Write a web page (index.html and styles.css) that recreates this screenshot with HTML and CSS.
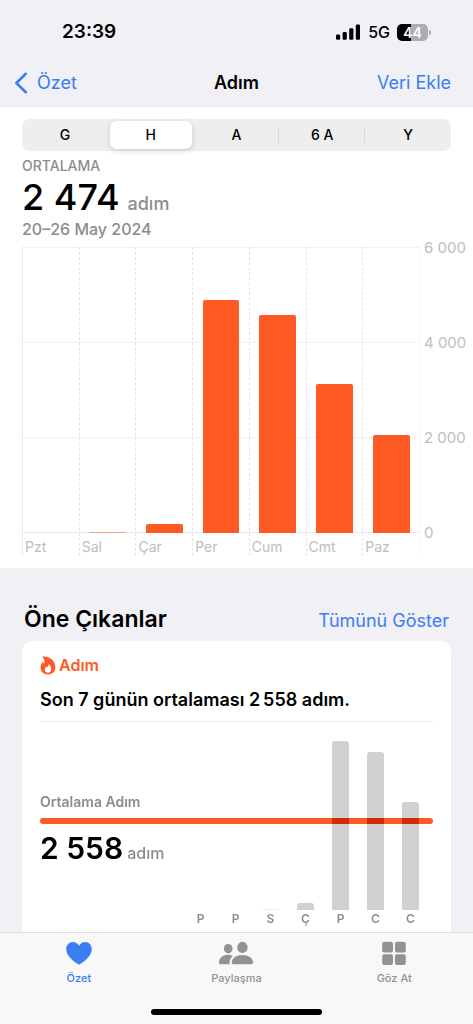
FILE: index.html
```html
<!DOCTYPE html>
<html lang="tr">
<head>
<meta charset="utf-8">
<meta name="viewport" content="width=device-width, initial-scale=1">
<title>Adım</title>
<link rel="stylesheet" href="styles.css">
</head>
<body>
<div class="app">
  <header class="top">
    <div class="status">
      <time class="clock">23:39</time>
      <div class="signals">
        <svg class="bars-icon" width="25" height="16" viewBox="0 0 25 16" aria-hidden="true">
          <rect x="0" y="10.5" width="4.2" height="5.2" rx="1.3"/>
          <rect x="6.6" y="8" width="4.2" height="7.7" rx="1.3"/>
          <rect x="13.2" y="4.2" width="4.2" height="11.5" rx="1.3"/>
          <rect x="19.8" y="0.4" width="4.2" height="15.3" rx="1.3"/>
        </svg>
        <span class="network">5G</span>
        <span class="battery"><span class="battery-level">44</span></span>
      </div>
    </div>
    <nav class="navbar">
      <a class="back" href="#ozet">
        <svg width="14" height="22" viewBox="0 0 14 22" aria-hidden="true"><path d="M11.8 1.8 2.4 11l9.4 9.2" fill="none" stroke="currentColor" stroke-width="2.6" stroke-linecap="round" stroke-linejoin="round"/></svg>
        <span>Özet</span>
      </a>
      <h1 class="title">Adım</h1>
      <a class="add" href="#ekle">Veri Ekle</a>
    </nav>
  </header>

  <main class="content">
    <section class="summary">
      <div class="segments" role="group" aria-label="Zaman aralığı">
        <button type="button" class="segment">G</button>
        <button type="button" class="segment selected" aria-pressed="true">H</button>
        <button type="button" class="segment">A</button>
        <button type="button" class="segment divided">6 A</button>
        <button type="button" class="segment divided">Y</button>
      </div>
      <p class="caption">ORTALAMA</p>
      <p class="total"><span class="total-value">2 474</span><span class="unit">adım</span></p>
      <p class="range">20–26 May 2024</p>

      <div class="chart">
        <div class="plot">
          <div class="day"><div class="track"></div><span class="day-name">Pzt</span></div>
          <div class="day"><div class="track"><div class="bar faint" style="height:1px"></div></div><span class="day-name">Sal</span></div>
          <div class="day"><div class="track"><div class="bar" style="height:3%"></div></div><span class="day-name">Çar</span></div>
          <div class="day"><div class="track"><div class="bar" style="height:81.6%"></div></div><span class="day-name">Per</span></div>
          <div class="day"><div class="track"><div class="bar" style="height:76.1%"></div></div><span class="day-name">Cum</span></div>
          <div class="day"><div class="track"><div class="bar" style="height:52.1%"></div></div><span class="day-name">Cmt</span></div>
          <div class="day"><div class="track"><div class="bar" style="height:34.2%"></div></div><span class="day-name">Paz</span></div>
        </div>
        <div class="scale"><span>6 000</span><span>4 000</span><span>2 000</span><span>0</span></div>
      </div>
    </section>

    <section class="highlights">
      <div class="heading">
        <h2 class="heading-title">Öne Çıkanlar</h2>
        <a class="heading-link" href="#tumu">Tümünü Göster</a>
      </div>
      <article class="card">
        <h3 class="card-kind">
          <svg width="16" height="19" viewBox="0 0 16 19" aria-hidden="true"><path fill="currentColor" fill-rule="evenodd" d="M2.900.5C9.500.2 15.400 4.300 15.400 11.300c0 4.500-3.100 7.200-7.400 7.200-4.400 0-7.400-2.800-7.400-6.900 0-2.500 1-4.200 2-5.700.3.700.8 1.200 1.600 1.600C4.900 5.100 4.600 3.300 2.300 1.100 2 .8 2.300.5 2.900.5zM8.700 7.800c.2 1.700-.5 2.700-1.300 3.500-.5-.2-.7-.6-.8-1.100-1.100 1.100-1.800 2.200-1.800 3.500 0 1.900 1.300 3 3.200 3s3.200-1.200 3.200-3.100c0-2.300-1.100-4.300-2.500-5.800z"/></svg>
          <span>Adım</span>
        </h3>
        <p class="card-text">Son 7 günün ortalaması 2&#8201;558 adım.</p>
        <div class="trend">
          <div class="average">
            <p class="average-label">Ortalama Adım</p>
            <div class="average-line"></div>
            <p class="average-total"><span class="average-value">2 558</span><span class="average-unit">adım</span></p>
          </div>
          <div class="trend-bars">
            <div class="mini-track"></div>
            <div class="mini-track"></div>
            <div class="mini-track"><div class="mini-bar trace" style="height:1px"></div></div>
            <div class="mini-track"><div class="mini-bar" style="height:4%"></div></div>
            <div class="mini-track"><div class="mini-bar" style="height:99.4%"></div></div>
            <div class="mini-track"><div class="mini-bar" style="height:92.9%"></div></div>
            <div class="mini-track"><div class="mini-bar" style="height:63.5%"></div></div>
          </div>
          <div class="trend-days"><span>P</span><span>P</span><span>S</span><span>Ç</span><span>P</span><span>C</span><span>C</span></div>
        </div>
      </article>
    </section>
  </main>

  <footer class="bottom">
    <nav class="tabs">
      <a class="tab active" href="#ozet">
        <svg width="36" height="26" viewBox="0 0 36 26" aria-hidden="true"><path fill="currentColor" d="M18 24.800C13.500 22.200 5.200 16.200 5.200 9.300 5.200 5.100 8 2 11.900 2c2.700 0 4.800 1.400 6.100 3.700C19.300 3.400 21.400 2 24.100 2c3.900 0 6.700 3.100 6.700 7.300 0 6.900-8.300 12.900-12.800 15.500z"/></svg>
        <span>Özet</span>
      </a>
      <a class="tab" href="#paylasma">
        <svg width="36" height="26" viewBox="0 0 36 26" aria-hidden="true"><g fill="currentColor"><ellipse cx="10.200" cy="8.700" rx="4.300" ry="4.800"/><ellipse cx="24.400" cy="7.400" rx="5.200" ry="5.600"/><path d="M1 22.500c0-4.800 4-7.700 9.200-7.700 1.700 0 3.300.4 4.700 1.100-2.200 1.600-3.400 3.900-3.400 6.600 0 .7.100 1.200.3 1.700H2.700c-1.100 0-1.700-.6-1.700-1.700z"/><path d="M13.700 22.600c0-4.300 4.500-7.700 10.700-7.700s10.700 3.400 10.700 7.700c0 1.100-.6 1.600-1.700 1.600h-18c-1.100 0-1.700-.5-1.700-1.600z"/></g></svg>
        <span>Paylaşma</span>
      </a>
      <a class="tab" href="#gozat">
        <svg width="36" height="26" viewBox="0 0 36 26" aria-hidden="true"><g fill="currentColor"><rect x="6.200" y="1.800" width="10.800" height="10.600" rx="2"/><rect x="19" y="1.800" width="10.800" height="10.600" rx="2"/><rect x="6.200" y="14.300" width="10.800" height="10.600" rx="2"/><rect x="19" y="14.300" width="10.800" height="10.600" rx="2"/></g></svg>
        <span>Göz At</span>
      </a>
    </nav>
    <div class="home-indicator"></div>
  </footer>
</div>
</body>
</html>
```
FILE: styles.css
```css
* { box-sizing: border-box; }
body {
  margin: 0;
  background: #f0f0f5;
  color: #000;
  font-family: Inter, "Liberation Sans", sans-serif;
}
h1, h2, h3, p { margin: 0; }
a { color: #3b7df2; text-decoration: none; }
svg { display: block; flex: none; }

.app { min-height: 100vh; display: flex; flex-direction: column; }

.top { border-bottom: 1px solid #e9e9ee; background: #f0f0f5; }
.status {
  display: flex;
  justify-content: space-between;
  align-items: center;
  height: 60px;
  padding: 4px 45px 0 62px;
}
.clock { font-size: 19px; font-weight: 600; line-height: 24px; }
.signals { display: flex; align-items: center; gap: 7px; }
.network { font-size: 16px; font-weight: 500; line-height: 20px; }
.battery {
  position: relative;
  width: 31px;
  height: 17px;
  border-radius: 5px;
  background: linear-gradient(90deg, #000 44%, #adadb0 44%);
  color: #fff;
  text-align: center;
}
.battery::after {
  content: "";
  position: absolute;
  right: -3px;
  top: 6px;
  width: 2px;
  height: 5px;
  border-radius: 0 2px 2px 0;
  background: #adadb0;
}
.battery-level { display: block; font-size: 14px; font-weight: 600; line-height: 17px; }
.navbar {
  display: grid;
  grid-template-columns: 1fr auto 1fr;
  align-items: center;
  height: 46px;
  padding: 0 22px 0 14px;
  font-size: 18px;
  line-height: 24px;
}
.back { display: flex; align-items: center; gap: 9px; }
.title { padding-left: 8px; font-size: 18px; font-weight: 600; }
.add { justify-self: end; }

.content { flex: 1; display: flex; flex-direction: column; }
.summary { padding: 12px 8px 12px 22px; background: #fff; }
.segments {
  display: grid;
  grid-template-columns: repeat(5, 1fr);
  height: 32px;
  margin-right: 14px;
  border-radius: 8px;
  background: #eee;
}
.segment {
  margin: 2px;
  padding: 0;
  border: 0;
  border-radius: 7px;
  background: none;
  color: #000;
  font: 500 14px/28px Inter, "Liberation Sans", sans-serif;
}
.selected { background: #fff; box-shadow: 0 2px 6px rgba(0, 0, 0, .14); }
.divided { position: relative; }
.divided::before {
  content: "";
  position: absolute;
  left: -3px;
  top: 6px;
  bottom: 6px;
  width: 1px;
  background: #d8d8da;
}
.caption { margin-top: 6px; color: #8c8c8c; font-size: 14px; font-weight: 500; line-height: 18px; }
.total { display: flex; align-items: baseline; gap: 8px; line-height: 44px; }
.total-value { font-size: 36px; font-weight: 500; }
.unit { color: #8c8c8c; font-size: 18px; font-weight: 500; line-height: 20px; }
.range { color: #8c8c8c; font-size: 16px; font-weight: 500; line-height: 20px; }

.chart { display: flex; gap: 4px; margin-top: 8px; }
.plot {
  flex: 1;
  display: grid;
  grid-template-columns: repeat(7, 1fr);
  border-right: 1px solid #f6f6f6;
  background: linear-gradient(#f1f1f3 0 0) 0 0 / 100% 1px no-repeat,
              linear-gradient(#f1f1f3 0 0) 0 95px / 100% 1px no-repeat,
              linear-gradient(#f1f1f3 0 0) 0 190px / 100% 1px no-repeat,
              linear-gradient(#e9e9eb 0 0) 0 285px / 100% 1px no-repeat;
}
.day { border-left: 1px dashed #e4e4e6; }
.day:first-child { border-left: 1px solid #ececee; }
.track { display: flex; align-items: flex-end; justify-content: center; height: 286px; }
.bar { width: 66%; border-radius: 2px 2px 0 0; background: #ff5a24; }
.faint { opacity: .5; }
.day-name { display: block; padding: 5px 0 0 2px; color: #bdbdbf; font-size: 14px; line-height: 18px; }
.scale {
  display: flex;
  flex-direction: column;
  justify-content: space-between;
  width: 41px;
  height: 305px;
  margin-top: -9px;
  color: #bdbdbf;
  font-size: 15px;
  line-height: 20px;
  white-space: nowrap;
}

.highlights { flex: 1; display: flex; flex-direction: column; padding: 37px 22px 0; }
.heading { display: flex; justify-content: space-between; align-items: baseline; padding: 0 2px 8px; }
.heading-title { font-size: 23px; font-weight: 600; line-height: 28px; }
.heading-link { font-size: 18px; line-height: 24px; }
.card { flex: 1; padding: 12px 18px 4px; border-radius: 10px 10px 0 0; background: #fff; }
.card-kind {
  display: flex;
  align-items: center;
  gap: 3px;
  color: #ff5a24;
  font-size: 16px;
  font-weight: 600;
  line-height: 24px;
}
.card-text {
  padding: 11px 0 9px;
  border-bottom: 1px solid #ececee;
  font-size: 18px;
  font-weight: 600;
  line-height: 24px;
}

/* Bars subtract their shade from whatever lies beneath, so the average line darkens where they cross. */
.trend {
  display: grid;
  grid-template-rows: 170px 18px;
  margin-top: 18px;
  background: #fff;
  isolation: isolate;
}
.trend-bars, .average { grid-area: 1 / 1; }
.trend-bars { mix-blend-mode: difference; }
.trend-bars, .trend-days {
  display: grid;
  grid-template-columns: repeat(7, 35px);
  justify-content: end;
  padding-right: 5px;
}
.trend-days { color: #8c8c8c; font-size: 12px; font-weight: 600; line-height: 18px; text-align: center; }
.mini-track { display: flex; align-items: flex-end; justify-content: center; }
.mini-bar { width: 17px; border-radius: 3px 3px 0 0; background: #2e2e2c; }
.trace { opacity: .4; }
.average { padding-top: 52px; }
.average-label { color: #8c8c8c; font-size: 14px; font-weight: 600; line-height: 20px; }
.average-line { height: 6px; margin: 6px 0 4px; border-radius: 3px; background: #ff5a24; }
.average-total { display: flex; align-items: baseline; gap: 4px; line-height: 40px; }
.average-value { font-size: 30px; font-weight: 600; }
.average-unit { color: #8c8c8c; font-size: 16px; font-weight: 500; line-height: 20px; }

.bottom { border-top: 1px solid #dcdce0; background: #f8f8f8; }
.tabs { display: grid; grid-template-columns: repeat(3, 1fr); padding-top: 7px; }
.tab {
  display: flex;
  flex-direction: column;
  align-items: center;
  gap: 4px;
  color: #929292;
  font-size: 11px;
  font-weight: 500;
  line-height: 16px;
}
.active { color: #3b7df2; }
.home-indicator {
  width: 36%;
  height: 6px;
  margin: 23px auto 9px;
  border-radius: 3px;
  background: #000;
}
```
